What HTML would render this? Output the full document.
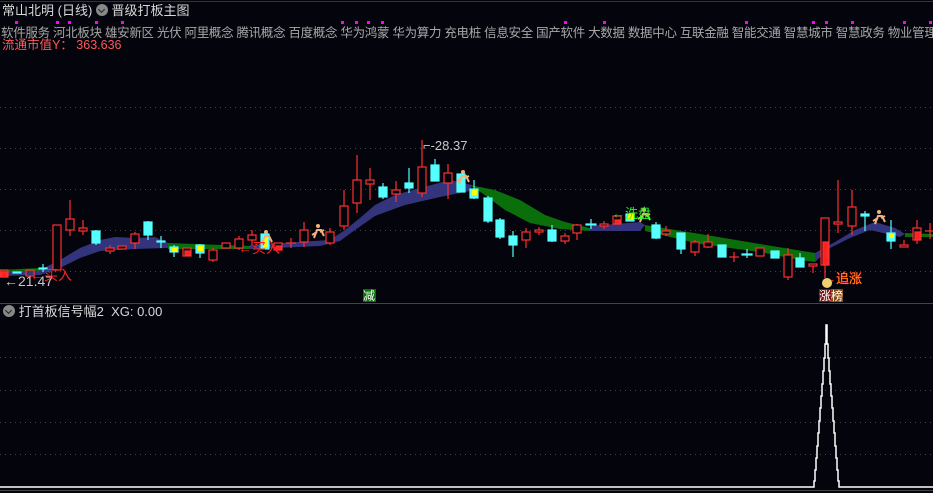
<!DOCTYPE html>
<html><head><meta charset="utf-8"><style>
html,body{margin:0;padding:0;background:#04040c;width:933px;height:493px;overflow:hidden}
body{position:relative;font-family:"Liberation Sans","Noto Sans CJK SC",sans-serif}
.t{position:absolute;white-space:nowrap;font-size:13px;line-height:16px}
.dot{position:absolute;width:3px;height:3px;background:#ff00ff}
.ic{display:inline-block;width:12px;height:12px;border-radius:50%;background:#888;vertical-align:-1px;position:relative}
.ic:after{content:"";position:absolute;left:3px;top:3px;width:4px;height:4px;border-right:1.5px solid #222;border-bottom:1.5px solid #222;transform:rotate(45deg)}
</style></head><body>
<div style="position:absolute;left:0;top:1px;width:933px;height:1px;background:#333"></div>
<div class="t" style="left:2px;top:3px;color:#d8d8d8;font-size:13px">常山北明 (日线) <span class="ic"></span> 晋级打板主图</div>
<div class="t" style="left:1px;top:25px;color:#a8a8a8;font-size:12.5px;letter-spacing:-0.3px">软件服务 河北板块 雄安新区 光伏 阿里概念 腾讯概念 百度概念 华为鸿蒙 华为算力 充电桩 信息安全 国产软件 大数据 数据中心 互联金融 智能交通 智慧城市 智慧政务 物业管理</div>
<div class="dot" style="left:15px;top:21px"></div><div class="dot" style="left:56px;top:21px"></div><div class="dot" style="left:68px;top:21px"></div><div class="dot" style="left:95px;top:21px"></div><div class="dot" style="left:121px;top:21px"></div><div class="dot" style="left:341px;top:21px"></div><div class="dot" style="left:355px;top:21px"></div><div class="dot" style="left:367px;top:21px"></div><div class="dot" style="left:381px;top:21px"></div><div class="dot" style="left:564px;top:21px"></div><div class="dot" style="left:603px;top:21px"></div><div class="dot" style="left:745px;top:21px"></div><div class="dot" style="left:812px;top:21px"></div><div class="dot" style="left:825px;top:21px"></div><div class="dot" style="left:851px;top:21px"></div><div class="dot" style="left:903px;top:21px"></div><div class="dot" style="left:929px;top:21px"></div>
<div class="t" style="left:2px;top:37px;color:#ff5a5a;font-size:12.5px">流通市值Y： 363.636</div>

<svg width="933" height="493" style="position:absolute;left:0;top:0">
<g stroke="#444" stroke-dasharray="1 4" stroke-width="1">
<line x1="0" y1="107.5" x2="933" y2="107.5"/><line x1="0" y1="148.5" x2="933" y2="148.5"/><line x1="0" y1="189.5" x2="933" y2="189.5"/><line x1="0" y1="230.5" x2="933" y2="230.5"/><line x1="0" y1="271.5" x2="933" y2="271.5"/>
<line x1="0" y1="357.5" x2="933" y2="357.5"/><line x1="0" y1="390.5" x2="933" y2="390.5"/><line x1="0" y1="422.5" x2="933" y2="422.5"/><line x1="0" y1="454.5" x2="933" y2="454.5"/>
</g>
<line x1="0" y1="303.5" x2="933" y2="303.5" stroke="#444"/>
<line x1="0" y1="490.5" x2="933" y2="490.5" stroke="#444"/>
<polygon fill="#34347c" points="0,272 40,270 60,260 80,248 100,240 115,237 135,238 155,237 168,243 168,248 135,249 100,251 80,258 60,268 40,275 0,276"/>
<polygon fill="#0a6e0a" points="168,243 250,246 250,249 168,249"/>
<polygon fill="#34347c" points="250,245 330,240 345,230 360,218 375,205 395,195 420,188 450,180 472,185 470,191 440,197 405,205 375,216 355,230 340,241 320,246 250,249"/>
<polygon fill="#0a6e0a" points="470,185 495,190 520,200 545,215 565,222 590,228 590,231 560,229 530,223 505,210 482,193"/>
<polygon fill="#34347c" points="590,226 640,222 645,225 640,231 590,231"/>
<polygon fill="#0a6e0a" points="645,225 700,234 760,244 815,253 815,262 800,260 760,252 700,244 645,231"/>
<polygon fill="#34347c" points="815,253 835,242 855,230 875,222 895,228 905,234 900,237 870,230 850,238 830,248 815,262"/>
<polygon fill="#0a6e0a" points="905,233 933,234 933,237 905,237"/>
<polygon fill="#0a6e0a" points="0,270 40,268 40,271 0,272"/>
<g stroke-width="1.2">
<g stroke="#ff3030" fill="none">
<rect x="53" y="225" width="8" height="45" fill="#04040c"/>
<line x1="70" y1="200" x2="70" y2="236"/><rect x="66" y="219" width="8" height="11" fill="#04040c"/>
<line x1="83" y1="220" x2="83" y2="235"/><rect x="79" y="228" width="8" height="3" fill="#04040c"/>
<line x1="110" y1="245" x2="110" y2="254"/><rect x="106" y="248" width="8" height="3" fill="#04040c"/>
<rect x="118" y="246" width="8" height="3" fill="#04040c"/>
<line x1="135" y1="232" x2="135" y2="249"/><rect x="131" y="234" width="8" height="9" fill="#04040c"/>
<rect x="183" y="248" width="8" height="8" fill="#04040c"/><rect x="185" y="251" width="5" height="4" fill="#ff2020"/>
<line x1="213" y1="248" x2="213" y2="262"/><rect x="209" y="250" width="8" height="10" fill="#04040c"/>
<rect x="222" y="243" width="8" height="5" fill="#04040c"/>
<line x1="239" y1="236" x2="239" y2="250"/><rect x="235" y="239" width="8" height="9" fill="#04040c"/>
<line x1="252" y1="230" x2="252" y2="245"/><rect x="248" y="235" width="8" height="5" fill="#04040c"/>
<rect x="274" y="243" width="8" height="7" fill="#04040c"/><rect x="276" y="246" width="5" height="4" fill="#ff2020"/>
<line x1="291" y1="238" x2="291" y2="248"/><line x1="286" y1="243" x2="296" y2="243"/>
<line x1="304" y1="222" x2="304" y2="247"/><rect x="300" y="230" width="8" height="12" fill="#04040c"/>
<line x1="330" y1="228" x2="330" y2="245"/><rect x="326" y="232" width="8" height="11" fill="#04040c"/>
<line x1="344" y1="190" x2="344" y2="230"/><rect x="340" y="206" width="8" height="20" fill="#04040c"/>
<line x1="357" y1="155" x2="357" y2="213"/><rect x="353" y="180" width="8" height="23" fill="#04040c"/>
<line x1="370" y1="168" x2="370" y2="200"/><rect x="366" y="180" width="8" height="4" fill="#04040c"/>
<line x1="396" y1="181" x2="396" y2="202"/><rect x="392" y="190" width="8" height="4" fill="#04040c"/>
<line x1="422" y1="140" x2="422" y2="197"/><rect x="418" y="167" width="8" height="26" fill="#04040c"/>
<line x1="448" y1="164" x2="448" y2="199"/><rect x="444" y="173" width="8" height="10" fill="#04040c"/>
<line x1="526" y1="228" x2="526" y2="248"/><rect x="522" y="232" width="8" height="8" fill="#04040c"/>
<line x1="539" y1="227" x2="539" y2="235"/><rect x="535" y="230" width="8" height="2" fill="#04040c"/>
<line x1="565" y1="233" x2="565" y2="244"/><rect x="561" y="236" width="8" height="5" fill="#04040c"/>
<line x1="577" y1="224" x2="577" y2="240"/><rect x="573" y="225" width="8" height="8" fill="#04040c"/>
<line x1="604" y1="221" x2="604" y2="229"/><rect x="600" y="224" width="8" height="2" fill="#04040c"/>
<rect x="613" y="216" width="8" height="8" fill="#04040c"/><rect x="615" y="220" width="5" height="4" fill="#ff2020"/>
<line x1="666" y1="226" x2="666" y2="236"/><rect x="662" y="231" width="8" height="3" fill="#04040c"/>
<line x1="695" y1="240" x2="695" y2="256"/><rect x="691" y="242" width="8" height="10" fill="#04040c"/>
<line x1="708" y1="234" x2="708" y2="248"/><rect x="704" y="242" width="8" height="5" fill="#04040c"/>
<line x1="734" y1="252" x2="734" y2="262"/><line x1="729" y1="257" x2="739" y2="257"/>
<rect x="756" y="248" width="8" height="8" fill="#04040c"/>
<line x1="788" y1="248" x2="788" y2="280"/><rect x="784" y="255" width="8" height="22" fill="#04040c"/>
<line x1="813" y1="264" x2="813" y2="273"/><rect x="809" y="264" width="8" height="2" fill="#04040c"/>
<line x1="825" y1="265" x2="825" y2="278"/><rect x="821" y="218" width="8" height="47" fill="#04040c"/><rect x="823" y="242" width="5" height="23" fill="#ff2020"/>
<line x1="838" y1="180" x2="838" y2="233"/><rect x="834" y="222" width="8" height="2" fill="#04040c"/>
<line x1="852" y1="190" x2="852" y2="235"/><rect x="848" y="207" width="8" height="19" fill="#04040c"/>
<line x1="904" y1="240" x2="904" y2="247"/><rect x="900" y="245" width="8" height="2" fill="#04040c"/>
<line x1="917" y1="220" x2="917" y2="244"/><rect x="913" y="228" width="8" height="12" fill="#04040c"/><rect x="915" y="232" width="5" height="8" fill="#ff2020"/>
<line x1="930" y1="223" x2="930" y2="239"/><line x1="925" y1="231" x2="935" y2="231"/>
<rect x="0" y="270" width="8" height="7"/><rect x="1" y="272" width="6" height="5" fill="#ff2020"/>
<rect x="26" y="270" width="8" height="6"/>
</g>
<g fill="#55ffff" stroke="#55ffff">
<rect x="13" y="272" width="8" height="1"/><rect x="39" y="268" width="8" height="1"/><line x1="43" y1="264" x2="43" y2="272"/>
<line x1="96" y1="230" x2="96" y2="245"/><rect x="92" y="231" width="8" height="12"/>
<line x1="148" y1="221" x2="148" y2="240"/><rect x="144" y="222" width="8" height="13"/>
<line x1="161" y1="236" x2="161" y2="248"/><rect x="157" y="241" width="8" height="1"/>
<line x1="174" y1="245" x2="174" y2="257"/><rect x="170" y="247" width="8" height="5"/>
<line x1="200" y1="244" x2="200" y2="258"/><rect x="196" y="245" width="8" height="8"/>
<rect x="261" y="234" width="8" height="15"/>
<line x1="383" y1="183" x2="383" y2="199"/><rect x="379" y="187" width="8" height="10"/>
<line x1="409" y1="168" x2="409" y2="193"/><rect x="405" y="183" width="8" height="5"/>
<line x1="435" y1="159" x2="435" y2="181"/><rect x="431" y="165" width="8" height="16"/>
<rect x="457" y="174" width="8" height="18"/>
<line x1="474" y1="180" x2="474" y2="199"/><rect x="470" y="189" width="8" height="9"/>
<line x1="488" y1="196" x2="488" y2="223"/><rect x="484" y="198" width="8" height="23"/>
<line x1="500" y1="218" x2="500" y2="239"/><rect x="496" y="220" width="8" height="17"/>
<line x1="513" y1="231" x2="513" y2="257"/><rect x="509" y="236" width="8" height="9"/>
<line x1="552" y1="225" x2="552" y2="242"/><rect x="548" y="230" width="8" height="11"/>
<line x1="591" y1="219" x2="591" y2="229"/><rect x="586" y="224" width="10" height="1"/>
<rect x="626" y="214" width="8" height="7"/>
<line x1="656" y1="222" x2="656" y2="239"/><rect x="652" y="225" width="8" height="13"/>
<line x1="681" y1="233" x2="681" y2="254"/><rect x="677" y="233" width="8" height="16"/>
<rect x="718" y="245" width="8" height="12"/>
<line x1="747" y1="249" x2="747" y2="258"/><rect x="742" y="254" width="10" height="1"/>
<rect x="771" y="251" width="8" height="7"/>
<line x1="800" y1="253" x2="800" y2="267"/><rect x="796" y="258" width="8" height="9"/>
<line x1="865" y1="211" x2="865" y2="231"/><rect x="861" y="214" width="8" height="2"/>
<line x1="891" y1="220" x2="891" y2="249"/><rect x="887" y="233" width="8" height="8"/>
</g>
<g fill="#ffff00" stroke="none">
<rect x="172" y="248" width="5" height="4"/><rect x="198" y="246" width="5" height="5"/><rect x="263" y="235" width="5" height="12"/><rect x="472" y="190" width="5" height="5"/><rect x="628" y="214" width="5" height="5"/><rect x="889" y="234" width="5" height="4"/>
</g>
</g>
<g fill="#f2b27a">
<circle cx="318" cy="226" r="2"/><path d="M314 238 L317 230 L321 230 L324 236 M317 232 L312 235 M320 232 L324 230" stroke="#f2b27a" stroke-width="2" fill="none"/>
<circle cx="463" cy="172" r="2"/><path d="M459 184 L462 176 L466 176 L469 182 M462 178 L457 181 M465 178 L469 176" stroke="#f2b27a" stroke-width="2" fill="none"/>
<circle cx="644" cy="210" r="2"/><path d="M640 222 L643 214 L647 214 L650 220 M643 216 L638 219 M646 216 L650 214" stroke="#f2b27a" stroke-width="2" fill="none"/>
<circle cx="879" cy="212" r="2"/><path d="M875 224 L878 216 L882 216 L885 222 M878 218 L873 221 M881 218 L885 216" stroke="#f2b27a" stroke-width="2" fill="none"/>
<circle cx="266" cy="232" r="2"/><path d="M262 244 L265 236 L269 236 L272 242" stroke="#f2b27a" stroke-width="2" fill="none"/>
</g>
<g font-family="Liberation Sans, Noto Sans CJK SC, sans-serif">
<text x="4" y="286" fill="#c8c8c8" font-size="14">←21.47</text>
<text x="423" y="150" fill="#c8c8c8" font-size="13">⌐-28.37</text>
<text x="30" y="280" fill="#ff2020" font-size="14">←买入</text>
<text x="238" y="253" fill="#ff2020" font-size="14">←买入</text>
<text x="612" y="218" fill="#20ff20" font-size="13">←洗盘</text>
<text x="823" y="283" fill="#ffff00" font-size="13" stroke="#ff2020" stroke-width="0.5">←追涨</text>
<rect x="363" y="289" width="13" height="13" fill="#0a6e0a"/>
<text x="363" y="300" fill="#ffffff" font-size="12">减</text>
<circle cx="827" cy="283" r="5" fill="#f0d070"/>
<rect x="819" y="289" width="12" height="13" fill="#801010"/><rect x="831" y="289" width="12" height="13" fill="#8a4a10"/>
<text x="819" y="300" fill="#ffffff" font-size="12">涨榜</text>
</g>
<polyline fill="none" stroke="#ffffff" stroke-width="1.5" points="0,487 814,487 814,481 815,481 815,470 816,470 816,458 817,458 817,446 818,446 818,433 819,433 819,421 820,421 820,408 821,408 821,396 822,396 822,384 823,384 823,371 824,371 824,358 825,358 825,344 826,344 826,332 826,325 827,325 827,332 827,344 828,344 828,358 829,358 829,371 830,371 830,384 831,384 831,396 832,396 832,408 833,408 833,421 834,421 834,433 835,433 835,446 836,446 836,458 837,458 837,470 838,470 838,481 839,481 839,487 933,487"/>
</svg>
<div class="t" style="left:3px;top:304px;color:#d8d8d8;font-size:13px"><span class="ic"></span> 打首板信号幅2&nbsp; XG: 0.00</div>
</body></html>
